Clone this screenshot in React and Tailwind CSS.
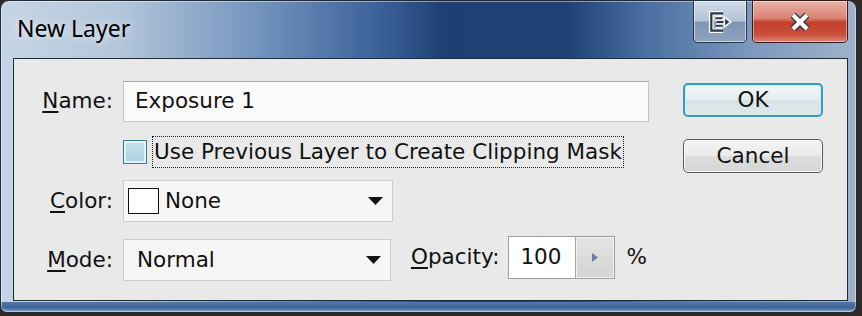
import React from 'react';

const ui = { fontFamily: '"DejaVu Sans", Verdana, sans-serif' };

const Arrow = () => (
  <svg width="15" height="8" viewBox="0 0 15 8">
    <polygon points="0,0 15,0 7.5,8" fill="#111" />
  </svg>
);

const Label = ({ u, rest, className = '' }) => (
  <span className={`text-[21.5px] text-[#111] ${className}`}>
    <span className="underline underline-offset-[3px] decoration-[1.5px]">{u}</span>
    {rest}
  </span>
);

export default function App() {
  return (
    <div className="w-[862px] h-[316px] bg-[#2f2b27] overflow-hidden" style={ui}>
      <div className="w-[857px] h-[313px] rounded-t-[9px] rounded-b-[7px] border border-[#1e2b3b] bg-[linear-gradient(180deg,transparent_301px,#5277ab_301px,#3f6396_307px,#7f9cc4_310px),linear-gradient(90deg,#c6d5e5_0%,#b3c6db_14%,#7394bd_30%,#3d629a_44%,#1d3f73_52%,#1f4176_66%,#4c71a2_76%,#7e99bd_88%,#9fb2ca_100%)] shadow-[inset_0_0_0_1px_rgba(255,255,255,0.45)] flex flex-col pl-[12px] pr-[8px] pb-[11px]">
        {/* Title bar */}
        <div className="h-[57px] flex items-start justify-between">
          <div className="pt-[16px] pl-[4px] text-[23px] leading-none text-black [text-shadow:0_0_8px_rgba(255,255,255,0.8)]" style={{ fontFamily: '"Noto Sans", "Open Sans", sans-serif' }}>
            New Layer
          </div>
          <div className="flex gap-[5px] -mt-px">
            <div className="w-[54px] h-[43px] rounded-b-[5px] border border-[#24344a] bg-[linear-gradient(180deg,#d2dce8_0%,#b4c3d5_48%,#7f95b2_52%,#8fa4bf_100%)] shadow-[inset_0_0_0_1px_rgba(255,255,255,0.55)] flex items-center justify-center">
              <svg width="26" height="24" viewBox="0 0 24 22">
                <g fill="none" strokeLinejoin="miter">
                  <path d="M15 3 H4 V19 H15" stroke="#f4f6f9" strokeWidth="4.5" />
                  <path d="M15 3 H4 V19 H15" stroke="#2c3540" strokeWidth="2" />
                  <path d="M8 7.5 H14 M8 14.5 H14" stroke="#f4f6f9" strokeWidth="4" />
                  <path d="M8 7.5 H14 M8 14.5 H14" stroke="#2c3540" strokeWidth="1.8" />
                  <path d="M9 11 H16" stroke="#f4f6f9" strokeWidth="4.5" />
                  <path d="M9 11 H16" stroke="#2c3540" strokeWidth="2" />
                </g>
                <polygon points="16,6.5 22,11 16,15.5" fill="#2c3540" stroke="#f4f6f9" strokeWidth="1.5" />
              </svg>
            </div>
            <div className="w-[96px] h-[43px] rounded-b-[5px] border border-[#3a1a15] bg-[linear-gradient(180deg,#e9b1a7_0%,#d98372_42%,#c2402b_52%,#c84c36_80%,#dc8574_100%)] shadow-[inset_0_0_0_1px_rgba(255,255,255,0.45)] flex items-center justify-center">
              <svg width="22" height="22" viewBox="0 0 22 22">
                <path d="M4 4 L18 18 M18 4 L4 18" stroke="#3b3b3b" strokeWidth="7" />
                <path d="M4 4 L18 18 M18 4 L4 18" stroke="#ffffff" strokeWidth="4.2" />
              </svg>
            </div>
          </div>
        </div>

        {/* Client area */}
        <div className="flex-1 border border-[#1f2a38] bg-[#e9e9e9] flex">
          <div className="w-[635px] pt-[22px]">
            {/* Name */}
            <div className="flex items-center h-[41px]">
              <div className="w-[99px] text-right"><Label u="N" rest="ame:" /></div>
              <div className="ml-[10px] w-[526px] h-[41px] border border-[#c4c4c4] border-t-[#a9a9a9] bg-[#fafafa] flex items-center pl-[11px] text-[21.5px] text-[#111]">
                Exposure 1
              </div>
            </div>
            {/* Checkbox */}
            <div className="mt-[14px] h-[32px] flex items-center pl-[109px]">
              <div className="w-[24px] h-[24px] border border-[#3f7688] bg-[linear-gradient(180deg,#c6e3ee,#a9d2e2)] shadow-[inset_0_0_0_2px_#e4f2f7]" />
              <div className="ml-[5px] h-[32px] border border-dotted border-[#222] flex items-center px-px text-[21.5px] text-[#111]">
                Use Previous Layer to Create Clipping Mask
              </div>
            </div>
            {/* Color */}
            <div className="mt-[12px] flex items-center h-[42px]">
              <div className="w-[99px] text-right"><Label u="C" rest="olor:" /></div>
              <div className="ml-[10px] w-[270px] h-[42px] border border-[#cdcdcd] bg-[#f6f6f6] flex items-center pl-[4px] pr-[9px]">
                <div className="w-[31px] h-[26px] border-[1.5px] border-[#111] bg-white" />
                <span className="ml-[6px] text-[21.5px] text-[#111] flex-1">None</span>
                <Arrow />
              </div>
            </div>
            {/* Mode + Opacity */}
            <div className="mt-[17px] flex items-center h-[42px]">
              <div className="w-[99px] text-right"><Label u="M" rest="ode:" /></div>
              <div className="ml-[10px] w-[268px] h-[42px] border border-[#cdcdcd] bg-[#f6f6f6] flex items-center pl-[13px] pr-[9px]">
                <span className="text-[21.5px] text-[#111] flex-1">Normal</span>
                <Arrow />
              </div>
              <div className="flex items-center mb-[5px]">
                <Label u="O" rest="pacity:" className="ml-[20px]" />
                <div className="ml-[9px] h-[43px] flex border border-[#9e9e9e]">
                  <div className="w-[66px] bg-white flex items-center pl-[11px] text-[21.5px] text-[#111]">100</div>
                  <div className="w-[39px] border-l border-[#a8a8a8] bg-[linear-gradient(180deg,#e4e4e4,#d4d4d4)] shadow-[inset_0_0_0_1px_#f2f2f2] flex items-center justify-center">
                    <svg width="6" height="9" viewBox="0 0 6 9">
                      <polygon points="0,0 6,4.5 0,9" fill="#7676a6" />
                    </svg>
                  </div>
                </div>
                <span className="ml-[11px] text-[21.5px] text-[#111]">%</span>
              </div>
            </div>
          </div>

          {/* Buttons */}
          <div className="ml-[34px] w-[140px] pt-[24px] flex flex-col">
            <button className="h-[34px] rounded-[5px] border-2 border-[#3b9bbb] bg-[linear-gradient(180deg,#f3f7f9_0%,#e6edf0_48%,#d7e2e7_52%,#dfe8ec_100%)] shadow-[inset_0_0_0_1px_#c9eef8] text-[21.5px] text-[#111] leading-none">
              OK
            </button>
            <button className="mt-[22px] h-[34px] rounded-[5px] border-[1.5px] border-[#5a5a5a] bg-[linear-gradient(180deg,#f4f4f4_0%,#ebebeb_48%,#dddddd_52%,#d6d6d6_100%)] shadow-[inset_0_0_0_1px_#fafafa] text-[21.5px] text-[#111] leading-none">
              Cancel
            </button>
          </div>
        </div>
      </div>
    </div>
  );
}
